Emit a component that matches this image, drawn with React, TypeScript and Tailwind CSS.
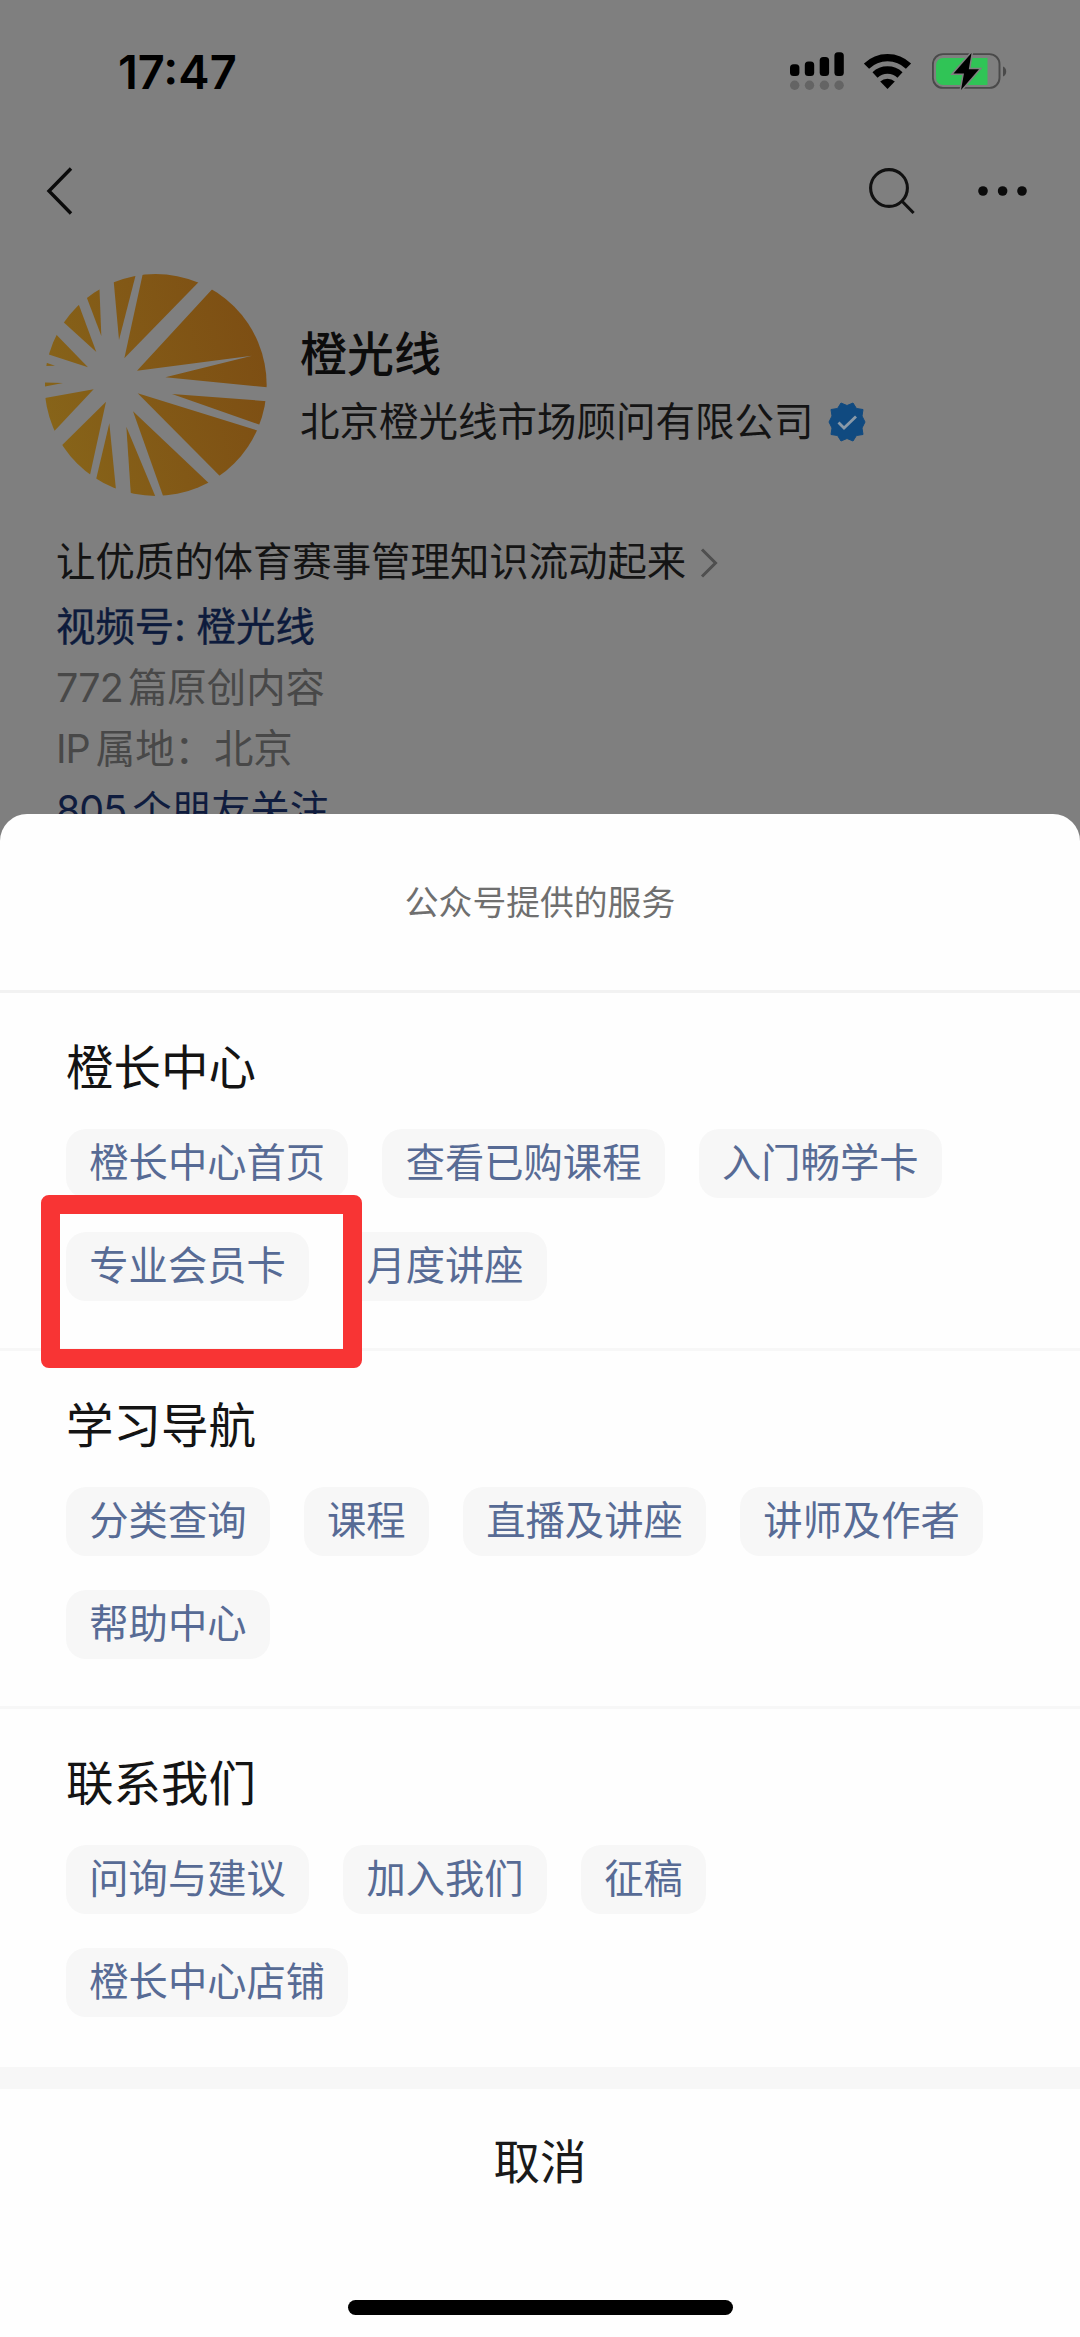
const groups = [
  {
    title: "橙长中心",
    items: ["橙长中心首页", "查看已购课程", "入门畅学卡", "专业会员卡", "月度讲座"],
  },
  {
    title: "学习导航",
    items: ["分类查询", "课程", "直播及讲座", "讲师及作者", "帮助中心"],
  },
  {
    title: "联系我们",
    items: ["问询与建议", "加入我们", "征稿", "橙长中心店铺"],
  },
]

// Orange wedges between the rays, cut to the disc by the clip path
const wedges = [
  "312,325 372,50 580,50",
  "350,362 610,80 800,150 800,418 435,382 695,317",
  "455,432 800,458 800,553",
  "352,430 780,563 660,740",
  "338,484 640,770 436,760",
  "318,530 420,775 334,770",
  "267,520 291,760 215,740",
  "257,455 197,730 80,630",
  "220,418 60,588 40,450",
  "128,399 50,397 50,414",
  "104,347 60,332 60,349",
  "203,352 50,302 80,225",
  "228,306 100,190 160,122",
  "243,258 185,105 236,80",
  "296,270 277,60 350,60",
]

function StatusBar() {
  return (
    <div className="flex h-[142px] items-center justify-between pl-[118px] pr-[72px]">
      <span className="mt-px font-['Inter'] text-[47px] leading-none font-semibold text-black">17:47</span>
      <div className="flex items-center">
        <svg className="w-[54px] h-[38px]" viewBox="790 52 54 38">
          <g fill="#000">
            <rect x="790" y="64.3" width="9.4" height="11.7" rx="3.5" />
            <rect x="804.8" y="61.5" width="9.4" height="14.5" rx="3.5" />
            <rect x="819.7" y="57" width="9.4" height="19" rx="3.5" />
            <rect x="834.4" y="52.3" width="9.4" height="23.7" rx="3.5" />
          </g>
          <g fill="#646464">
            <circle cx="794.7" cy="85.3" r="4.7" />
            <circle cx="809.5" cy="85.3" r="4.7" />
            <circle cx="824.4" cy="85.3" r="4.7" />
            <circle cx="839.1" cy="85.3" r="4.7" />
          </g>
        </svg>
        <svg className="ml-5 w-[48px] h-[38px]" viewBox="864 52 48 38">
          <g fill="none" stroke="#000" strokeWidth="7.4">
            <path d="M866.5 66.2 A30 30 0 0 1 908.5 66.2" />
            <path d="M875 75 A18.2 18.2 0 0 1 900 75" />
          </g>
          <path d="M887.5 89 L880.2 81.6 A10.5 10.5 0 0 1 894.8 81.6 Z" fill="#000" />
        </svg>
        <svg className="ml-5 w-[76px] h-[38px]" viewBox="932 52 76 38">
          <rect x="932.9" y="54.1" width="66.6" height="33.8" rx="10" fill="none" stroke="#4a4a4a" strokeWidth="1.9" />
          <path d="M943 58 h44.5 v27 h-44.5 a7 7 0 0 1 -7 -7 v-13 a7 7 0 0 1 7 -7z" fill="#30c456" />
          <path d="M1003 66.5 a5.5 5.5 0 0 1 0 10z" fill="#4a4a4a" />
          <path d="M971.5 53 L953.5 73.6 H964 L961 90 L979 69.3 H968.8 Z" fill="#000" stroke="#7f7f7f" strokeWidth="3" paintOrder="stroke" />
        </svg>
      </div>
    </div>
  )
}

function NavBar() {
  return (
    <div className="flex h-[98px] items-center justify-between pl-[46px] pr-[52px]">
      <svg className="w-[27px] h-[48px]" viewBox="0 0 27 48" fill="none" stroke="#0b0b0b" strokeWidth="3.4">
        <path d="M25 1.5 L3 24 L25 46.5" />
      </svg>
      <div className="flex items-center gap-[63px]">
        <svg className="w-[46px] h-[48px]" viewBox="869 167 46 48" fill="none" stroke="#111" strokeWidth="3.1">
          <circle cx="889" cy="188" r="18.4" />
          <path d="M901.8 201 L913.6 213" />
        </svg>
        <svg className="w-[50px] h-[12px]" viewBox="978 185 50 12" fill="#0b0b0b">
          <circle cx="983" cy="191" r="4.8" />
          <circle cx="1002.6" cy="191" r="4.8" />
          <circle cx="1022" cy="191" r="4.8" />
        </svg>
      </div>
    </div>
  )
}

function Avatar() {
  return (
    <svg className="w-[222px] h-[222px] shrink-0" viewBox="74 72 666 666">
      <defs>
        <clipPath id="disc">
          <circle cx="406" cy="405" r="333" />
        </clipPath>
        <linearGradient id="orange" gradientUnits="userSpaceOnUse" x1="80" y1="500" x2="740" y2="300">
          <stop offset="0" stopColor="#876419" />
          <stop offset="0.5" stopColor="#825816" />
          <stop offset="1" stopColor="#7d4e13" />
        </linearGradient>
      </defs>
      <g clipPath="url(#disc)" fill="url(#orange)">
        {wedges.map((points) => (
          <polygon key={points} points={points} />
        ))}
      </g>
    </svg>
  )
}

function Profile() {
  return (
    <div>
      <div className="flex items-center pt-[34px] pl-[45px]">
        <Avatar />
        <div className="mt-[4px] ml-[33px]">
          <h1 className="text-[47px] leading-[70px] font-medium text-[#0c0c0c]">橙光线</h1>
          <div className="flex items-center">
            <span className="text-[39.5px] leading-[67px] text-[#141414]">北京橙光线市场顾问有限公司</span>
            <svg className="ml-[14px] w-[38px] h-[40px]" viewBox="0 0 38 40">
              <path
                d="M19 3.5 L25 1 L28.500 6.500 L35 7.500 L34 14 L37 20 L34 26 L35 32.500 L28.500 33.500 L25 39 L19 36.500 L13 39 L9.500 33.500 L3 32.500 L4 26 L1 20 L4 14 L3 7.500 L9.500 6.500 L13 1 Z"
                fill="#104a80"
                stroke="#104a80"
                strokeLinejoin="round"
              />
              <path d="M10.500 20.500 L16 26 L28 14.500" fill="none" stroke="#8a9aa8" strokeWidth="2.8" />
            </svg>
          </div>
        </div>
      </div>
      <div className="mt-[32px] pl-[56px] text-[39.4px] leading-[61px]">
        <div className="flex h-[69px] items-center text-[#141414]">
          让优质的体育赛事管理知识流动起来
          <svg className="ml-[14px] w-[18px] h-[30px]" viewBox="0 0 18 30" fill="none" stroke="#4f4f4f" strokeWidth="3">
            <path d="M2 1.500 L15.500 15 L2 28.500" />
          </svg>
        </div>
        <div className="h-[61px] text-[#0d1b3c] [-webkit-text-stroke:0.4px_#0d1b3c]">视频号: 橙光线</div>
        <div className="h-[61px] text-[#484848]">
          <span className="mr-[5px] tracking-[-0.8px]">772</span>篇原创内容
        </div>
        <div className="h-[61px] text-[#484848]">
          <span className="mr-[6px] tracking-[-1px]">IP</span>属地：北京
        </div>
        <div className="h-[61px] text-[#0f1c3e]">
          <span className="mr-[6px] tracking-[-1px]">805</span>个朋友关注
        </div>
      </div>
    </div>
  )
}

export default function App() {
  return (
    <div className="relative flex h-[2337px] w-[1080px] flex-col overflow-hidden bg-[#7f7f7f] font-['Inter','Noto_Sans_CJK_SC',sans-serif]">
      {/* The last profile line runs under the sheet */}
      <div className="h-[814px] shrink-0">
        <StatusBar />
        <NavBar />
        <Profile />
      </div>

      {/* Bottom sheet */}
      <div className="relative flex grow flex-col rounded-t-[27px] bg-[#fefefe]">
        <div className="flex h-[179px] items-center justify-center border-b-[3px] border-[#f2f2f2] pt-[2px] text-[33.8px] text-[#6f6f6f]">
          公众号提供的服务
        </div>

        {groups.map((group) => (
          <section key={group.title} className="h-[358px] border-b-[3px] border-[#f7f7f7] pt-[40px] pl-[66px] last-of-type:border-b-0">
            <h2 className="text-[47.500px] leading-[70px] text-[#141414]">{group.title}</h2>
            <div className="mt-[26px] flex w-[940px] flex-wrap gap-x-[34px] gap-y-[34px]">
              {group.items.map((item) => (
                <a key={item} className="flex h-[69px] items-center rounded-[20px] bg-[#f7f7f7] px-[23.300px] pb-px text-[39.3px] leading-none text-[#576b95]">
                  {item}
                </a>
              ))}
            </div>
          </section>
        ))}

        <div className="h-[22px] bg-[#f7f7f7]" />
        <button className="h-[146px] text-[46.500px] leading-none text-[#1a1a1a]">取消</button>
        <div className="mx-auto mt-auto mb-[22px] h-[15px] w-[385px] rounded-full bg-black" />

        {/* Marker around the member card entry */}
        <div className="absolute top-[381px] left-[41px] h-[173px] w-[321px] rounded-[8px] border-[19px] border-[#f83434]" />
      </div>
    </div>
  )
}
